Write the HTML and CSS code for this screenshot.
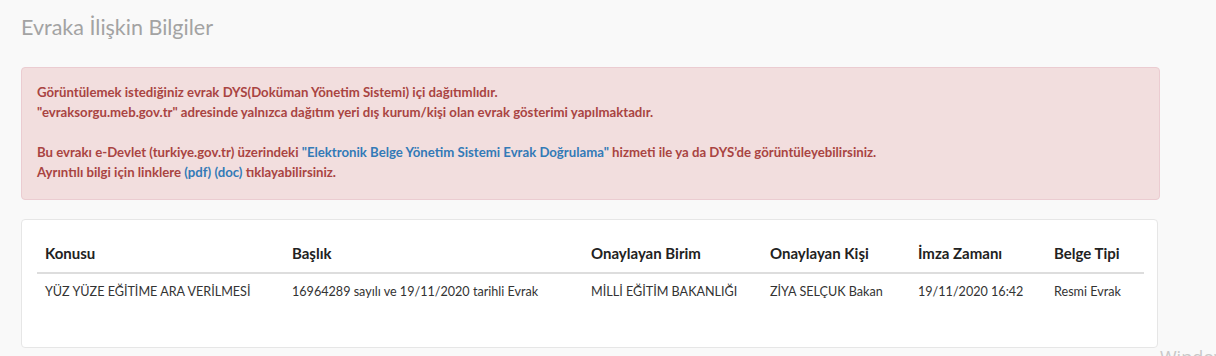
FILE: index.html
```html
<!DOCTYPE html>
<html lang="tr">
<head>
    <meta charset="UTF-8">
    <meta name="viewport" content="width=device-width, initial-scale=1.0">
    <title>Evraka İlişkin Bilgiler</title>
    <link rel="stylesheet" href="styles.css">
</head>
<body>
    <div class="page">
        <h2 class="page-title">Evraka İlişkin Bilgiler</h2>

        <div class="alert">
            <p>Görüntülemek istediğiniz evrak DYS(Doküman Yönetim Sistemi) içi dağıtımlıdır.</p>
            <p>"evraksorgu.meb.gov.tr" adresinde yalnızca dağıtım yeri dış kurum/kişi olan evrak gösterimi yapılmaktadır.</p>
            <p>&nbsp;</p>
            <p>Bu evrakı e-Devlet (turkiye.gov.tr) üzerindeki <a href="#">"Elektronik Belge Yönetim Sistemi Evrak Doğrulama"</a> hizmeti ile ya da DYS’de görüntüleyebilirsiniz.</p>
            <p>Ayrıntılı bilgi için linklere <a href="#">(pdf)</a> <a href="#">(doc)</a> tıklayabilirsiniz.</p>
        </div>

        <div class="panel">
            <table class="doc-table">
                <thead>
                    <tr>
                        <th class="col-konu">Konusu</th>
                        <th class="col-baslik">Başlık</th>
                        <th class="col-birim">Onaylayan Birim</th>
                        <th class="col-kisi">Onaylayan Kişi</th>
                        <th class="col-zaman">İmza Zamanı</th>
                        <th>Belge Tipi</th>
                    </tr>
                </thead>
                <tbody>
                    <tr>
                        <td>YÜZ YÜZE EĞİTİME ARA VERİLMESİ</td>
                        <td>16964289 sayılı ve 19/11/2020 tarihli Evrak</td>
                        <td>MİLLİ EĞİTİM BAKANLIĞI</td>
                        <td>ZİYA SELÇUK Bakan</td>
                        <td>19/11/2020 16:42</td>
                        <td>Resmi Evrak</td>
                    </tr>
                </tbody>
            </table>
        </div>
    </div>
    <div class="watermark">Windows</div>
</body>
</html>
```

FILE: styles.css
```css
* {
    margin: 0;
    padding: 0;
    box-sizing: border-box;
}

body {
    font-family: Lato, "Open Sans", sans-serif;
    background: #f9f9f9;
    color: #333;
    overflow: hidden;
}

.page {
    width: 1160px;
    padding: 14px 0 0 21px;
}

.page-title {
    font-size: 21.5px;
    font-weight: normal;
    color: #a3a3a3;
    line-height: 26px;
    margin-bottom: 27px;
}

.alert {
    background: #f2dede;
    border: 1px solid #ebccd1;
    border-radius: 4px;
    color: #a94442;
    padding: 14px 15px 17px;
    font-size: 13.2px;
    font-weight: bold;
    line-height: 20px;
    margin-bottom: 19px;
}

.alert a {
    color: #337ab7;
    text-decoration: none;
}

.panel {
    background: #fff;
    border: 1px solid #e6e6e6;
    border-radius: 4px;
    padding: 15px 13px 37px 15px;
    width: 1137px;
}

.doc-table {
    width: 100%;
    border-collapse: collapse;
    font-size: 12.6px;
}

.doc-table th {
    text-align: left;
    font-weight: bold;
    color: #222;
    padding: 8px 8px 9px;
    line-height: 20px;
    border-bottom: 2px solid #ddd;
    font-size: 15px;
}

.doc-table td {
    padding: 8px;
    line-height: 20px;
    color: #333;
}

.col-konu { width: 247px; }
.col-baslik { width: 299px; }
.col-birim { width: 179px; }
.col-kisi { width: 148px; }
.col-zaman { width: 136px; }

.watermark {
    position: absolute;
    left: 1160px;
    top: 345px;
    font-size: 18px;
    color: #c8c8c8;
    font-family: "Open Sans", sans-serif;
}
```
